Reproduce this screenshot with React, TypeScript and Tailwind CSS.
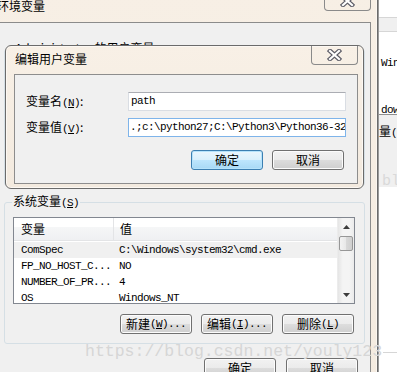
import React from "react";

const CJK = "font-['Noto_Sans_CJK_SC','Noto_Sans',sans-serif]";
const MONO = "font-['Liberation_Mono',monospace]";

function CloseX() {
  return (
    <svg width="15" height="12" viewBox="0 0 15 12">
      <path d="M3 2 L12 10 M12 2 L3 10" stroke="#5b5b66" strokeWidth="4.4" strokeLinecap="square" fill="none" />
      <path d="M3 2 L12 10 M12 2 L3 10" stroke="#ffffff" strokeWidth="2.2" strokeLinecap="square" fill="none" />
    </svg>
  );
}

function Mn({ k }: { k: string }) {
  return (
    <span className={`${MONO} text-[11px] tracking-[-0.6px]`}>
      (<span className="underline underline-offset-1">{k}</span>)
    </span>
  );
}

function Btn({ children, def }: { children: React.ReactNode; def?: boolean }) {
  return (
    <div
      className={
        def
          ? `flex h-[20px] w-[72px] items-center justify-center rounded-[3px] border border-[#3c7fb1] bg-[linear-gradient(#eaf6fd,#d9f0fc_50%,#bee6fd_50%,#a7d9f5)] shadow-[inset_0_0_0_1px_#b6e3fb] text-[12px] leading-none text-black ${CJK}`
          : `flex h-[20px] w-[72px] items-center justify-center rounded-[3px] border border-[#707070] bg-[linear-gradient(#f2f2f2,#ebebeb_50%,#dddddd_50%,#cfcfcf)] shadow-[inset_0_0_0_1px_#fcfcfc] text-[12px] leading-none text-black ${CJK}`
      }
    >
      {children}
    </div>
  );
}

const rows: [string, string][] = [
  ["ComSpec", "C:\\Windows\\system32\\cmd.exe"],
  ["FP_NO_HOST_C...", "NO"],
  ["NUMBER_OF_PR...", "4"],
  ["OS", "Windows_NT"],
];

export default function App() {
  return (
    <div className="relative h-[372px] w-[397px] overflow-hidden bg-[#f5ede3]">
      {/* background window on the right */}
      <div className="absolute left-[378px] top-0 flex h-full w-[30px] flex-col border-l border-[#9a9a9a] bg-white">
        <div className="mt-[17px] h-[15px] border-y border-[#d6d6d6] bg-[#f0f0f0]" />
        <div className={`mt-[24px] pl-[2px] text-[11px] leading-[14px] tracking-[-0.6px] text-black ${MONO}`}>Win</div>
        <div className={`mt-[34px] h-[11px] overflow-hidden border-b border-[#8f8f8f] pl-[2px] text-[11px] leading-[12px] tracking-[-0.6px] text-black ${MONO}`}>dow</div>
        <div className="flex h-[72px] flex-col bg-[#f0f0f0]">
          <div className={`mt-[9px] whitespace-nowrap text-[12px] leading-[14px] text-black ${CJK}`}>量<Mn k="W" /></div>
          <div className={`mt-[34px] pl-[3px] text-[15px] leading-[16px] text-[#d9d9d9] ${MONO}`}>bl</div>
        </div>
      </div>

      {/* 环境变量 window */}
      <div className="absolute left-[-8px] top-[-12px] flex h-[420px] w-[386px] flex-col rounded-[6px] border border-[#6b6b6b] bg-[linear-gradient(180deg,#f7efe5,#f4ebe0)] shadow-[inset_0_0_0_1px_#fbf6f0]">
        <div className="flex h-[33px] shrink-0 items-start">
          <div className={`pl-[4px] pt-[9px] text-[12px] leading-[16px] text-black ${CJK}`}>环境变量</div>
          <div className="ml-auto mr-[6px] flex h-[22px] w-[47px] items-end justify-center rounded-b-[4px] border border-t-0 border-[#8a8a8a] pb-[3px]">
            <CloseX />
          </div>
        </div>
        <div className="ml-[5px] mr-[6px] flex flex-1 flex-col border border-[#8b8b8b] bg-[#f0f0f0]">
          {/* user variables group (mostly covered) */}
          <fieldset className="mx-[5px] mt-[17px] h-[146px] rounded-[3px] border border-[#d5dfe5]">
            <legend className={`ml-[9px] px-[1px] text-[12px] leading-[16px] text-black ${CJK}`}>
              Administrator 的用户变量<Mn k="U" />
            </legend>
          </fieldset>

          {/* system variables group */}
          <fieldset className="mx-[5px] mt-[7px] flex flex-col rounded-[3px] border border-[#d5dfe5] pb-[9px]">
            <legend className={`ml-[7px] px-[1px] text-[12px] leading-[16px] text-black ${CJK}`}>
              系统变量<Mn k="S" />
            </legend>
            <div className="ml-[8px] mr-[9px] mt-[6px] flex h-[87px] overflow-hidden border border-[#828790] bg-white">
              <div className="flex min-w-0 flex-1 flex-col">
                <div className={`flex h-[23px] shrink-0 border-b border-[#e3e4e6] bg-[linear-gradient(#ffffff_0%,#ffffff_42%,#f5f6f7_42%,#eff0f2_100%)] text-[12px] leading-[22px] text-black ${CJK}`}>
                  <div className="w-[100px] border-r border-[#e3e4e6] pl-[7px]">变量</div>
                  <div className="pl-[6px]">值</div>
                </div>
                <div className="mt-[1px] flex flex-col">
                  {rows.map(([n, v], i) => (
                    <div
                      key={n}
                      className={`flex h-[16px] shrink-0 items-center whitespace-nowrap text-[11px] leading-[16px] tracking-[-0.6px] text-black ${MONO} ${i === 0 ? "bg-[#f0f0f0]" : ""}`}
                    >
                      <div className="w-[100px] shrink-0 pl-[7px]">{n}</div>
                      <div className="pl-[5px]">{v}</div>
                    </div>
                  ))}
                </div>
              </div>
              <div className="flex w-[17px] shrink-0 flex-col border-l border-[#ececec] bg-[linear-gradient(90deg,#e5e5e5,#f4f4f4_30%,#f4f4f4_70%,#ebebeb)]">
                <div className="flex h-[17px] shrink-0 items-center justify-center">
                  <svg width="7" height="4" viewBox="0 0 7 4"><path d="M3.5 0 L7 4 L0 4 Z" fill="#3c3c3c" /></svg>
                </div>
                <div className="mx-[1px] mt-[1px] h-[15px] shrink-0 rounded-[2px] border border-[#979797] bg-[linear-gradient(90deg,#f3f3f3,#e8e8e8_50%,#d9d9d9_50%,#cfcfcf)]" />
                <div className="flex-1" />
                <div className="flex h-[17px] shrink-0 items-center justify-center">
                  <svg width="7" height="4" viewBox="0 0 7 4"><path d="M0 0 L7 0 L3.5 4 Z" fill="#3c3c3c" /></svg>
                </div>
              </div>
            </div>
            <div className="mt-[10px] flex justify-end gap-[9px] pr-[10px]">
              <Btn>新建<Mn k="W" /><span className={`${MONO} text-[11px] tracking-[-0.6px]`}>...</span></Btn>
              <Btn>编辑<Mn k="I" /><span className={`${MONO} text-[11px] tracking-[-0.6px]`}>...</span></Btn>
              <Btn>删除<Mn k="L" /></Btn>
            </div>
          </fieldset>

          <div className="mt-[14px] flex justify-end gap-[10px] pr-[12px]">
            <Btn>确定</Btn>
            <Btn>取消</Btn>
          </div>
        </div>
      </div>

      {/* watermark */}
      <div className={`pointer-events-none absolute left-[85px] top-[342px] flex items-center whitespace-nowrap text-[16.5px] leading-[20px] text-[#d6d6d6] ${MONO}`}>
        https://blog.csdn.net/youly123
        <span className="ml-[1px] h-[1px] w-[20px] bg-[#d6d6d6]" />
      </div>

      {/* 编辑用户变量 dialog */}
      <div className="absolute left-[5px] top-[45px] flex h-[144px] w-[359px] flex-col rounded-[6px] border border-[#6b6b6b] bg-[linear-gradient(180deg,#f8f0e6,#f3eadf)] shadow-[inset_0_0_0_1px_#fcf8f3]">
        <div className="flex h-[28px] shrink-0 items-start">
          <div className={`pl-[9px] pt-[5px] text-[12px] leading-[16px] text-black ${CJK}`}>编辑用户变量</div>
          <div className="ml-auto mr-[5px] flex h-[19px] w-[47px] items-center justify-center rounded-b-[4px] border border-t-0 border-[#8a8a8a]">
            <CloseX />
          </div>
        </div>
        <div className="ml-[8px] mr-[5px] flex h-[110px] shrink-0 flex-col border border-[#8d8d8d] bg-[#f0f0f0]">
          <div className="mt-[17px] flex items-center pr-[11px]">
            <div className={`pl-[11px] text-[12px] leading-[16px] text-black ${CJK}`}>变量名<Mn k="N" />:</div>
            <div className={`ml-auto flex h-[19px] w-[218px] items-center border border-[#d9dde3] border-t-[#abadb3] bg-white pl-[2px] text-[11px] tracking-[-0.6px] text-black ${MONO}`}>path</div>
          </div>
          <div className="mt-[7px] flex items-center pr-[11px]">
            <div className={`pl-[11px] text-[12px] leading-[16px] text-black ${CJK}`}>变量值<Mn k="V" />:</div>
            <div className={`ml-auto flex h-[19px] w-[218px] items-center overflow-hidden whitespace-nowrap border border-[#7eb4ea] bg-white pl-[1px] text-[11px] tracking-[-0.6px] text-black ${MONO}`}>.;c:\python27;C:\Python3\Python36-32</div>
          </div>
          <div className="mt-[13px] flex justify-end gap-[9px] pr-[13px]">
            <Btn def>确定</Btn>
            <Btn>取消</Btn>
          </div>
        </div>
      </div>
    </div>
  );
}
